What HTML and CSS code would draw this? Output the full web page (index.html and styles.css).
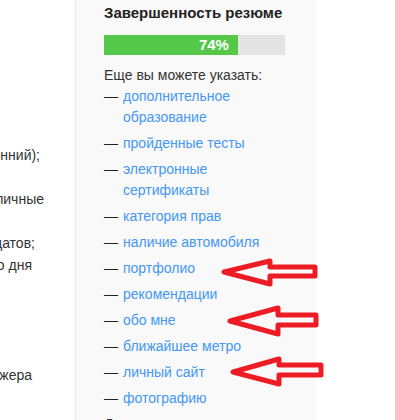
FILE: index.html
```html
<!DOCTYPE html>
<html lang="ru">
<head>
    <meta charset="UTF-8">
    <title>Резюме</title>
    <link rel="stylesheet" href="styles.css">
</head>
<body>
    <div class="page">
        <!-- обрезанный основной текст слева -->
        <div class="main-col">
            <div class="cut-line end-40 top-144">бывших и нынешних подчиненний);</div>
            <div class="cut-line end-44 gap-22">рекомендации, личные</div>
            <div class="cut-line end-35 gap-22">кандидатов;</div>
            <div class="cut-line end-32">первого дня</div>
            <div class="cut-line end-32 gap-88">менеджера</div>
        </div>

        <!-- Боковая панель -->
        <div class="sidebar">
            <h3 class="sidebar-title">Завершенность резюме</h3>
            <div class="progress">
                <div class="progress-fill">74%</div>
            </div>
            <p class="hint">Еще вы можете указать:</p>
            <ul class="todo-list">
                <li><a href="#">дополнительное образование</a></li>
                <li><a href="#">пройденные тесты</a></li>
                <li><a href="#">электронные сертификаты</a></li>
                <li><a href="#">категория прав</a></li>
                <li><a href="#">наличие автомобиля</a></li>
                <li><a href="#">портфолио</a></li>
                <li><a href="#">рекомендации</a></li>
                <li><a href="#">обо мне</a></li>
                <li><a href="#">ближайшее метро</a></li>
                <li><a href="#">личный сайт</a></li>
                <li><a href="#">фотографию</a></li>
            </ul>
            <p class="hint next">Дополнительно</p>
        </div>
    </div>

    <!-- красные стрелки-пометки -->
    <svg class="marks" width="395" height="420" viewBox="0 0 395 420">
        <g fill="none" stroke="#ed1c24" stroke-width="5" stroke-linejoin="round">
            <path d="M224 272 L270 261 L270 267 L315 267 L315 276 L270 276 L270 284 Z"/>
            <path d="M230 321 L278 308 L278 315 L316 315 L316 325 L278 325 L278 334 Z"/>
            <path d="M233 372 L279 359 L279 365 L321 365 L321 375 L279 375 L279 384 Z"/>
        </g>
    </svg>
</body>
</html>
```

FILE: styles.css
```css
* {
    margin: 0;
    padding: 0;
    box-sizing: border-box;
}

body {
    font-family: 'Liberation Sans', Arial, sans-serif;
    font-size: 14px;
    color: #333;
    background: #fff;
    overflow: hidden;
}

.page {
    display: flex;
    height: 420px;
}

.main-col {
    width: 75px;
    overflow: hidden;
    line-height: 22px;
}

.cut-line {
    white-space: nowrap;
    display: flex;
    justify-content: flex-end;
}

.end-40 { padding-right: 35px; }
.end-44 { padding-right: 31px; }
.end-35 { padding-right: 40px; }
.end-32 { padding-right: 43px; }

.top-144 { margin-top: 144px; }
.gap-22 { margin-top: 22px; }
.gap-88 { margin-top: 88px; }

.sidebar {
    width: 241px;
    background: #f9f9f9;
    border-left: 1px solid #e6e6e6;
    padding: 3px 0 0 28px;
}

.sidebar-title {
    font-size: 15px;
    font-weight: bold;
    line-height: 20px;
    color: #222;
}

.progress {
    margin-top: 12px;
    width: 181px;
    height: 20px;
    background: #e4e4e4;
}

.progress-fill {
    width: 74%;
    height: 100%;
    background: #55c84a;
    color: #fff;
    font-size: 15px;
    font-weight: bold;
    line-height: 20px;
    text-align: right;
    padding-right: 9px;
}

.hint {
    margin-top: 10px;
    line-height: 21px;
}

.todo-list {
    list-style: none;
    line-height: 21px;
    width: 181px;
}

.todo-list li {
    display: flex;
    margin-bottom: 5px;
}

.todo-list li::before {
    content: "—";
    flex: none;
    width: 19px;
    color: #222;
}

.todo-list a {
    color: #4497f5;
    text-decoration: none;
    flex: 1;
}

.hint.next {
    margin-top: 0;
}

.marks {
    position: absolute;
    top: 0;
    left: 0;
    pointer-events: none;
}
```
